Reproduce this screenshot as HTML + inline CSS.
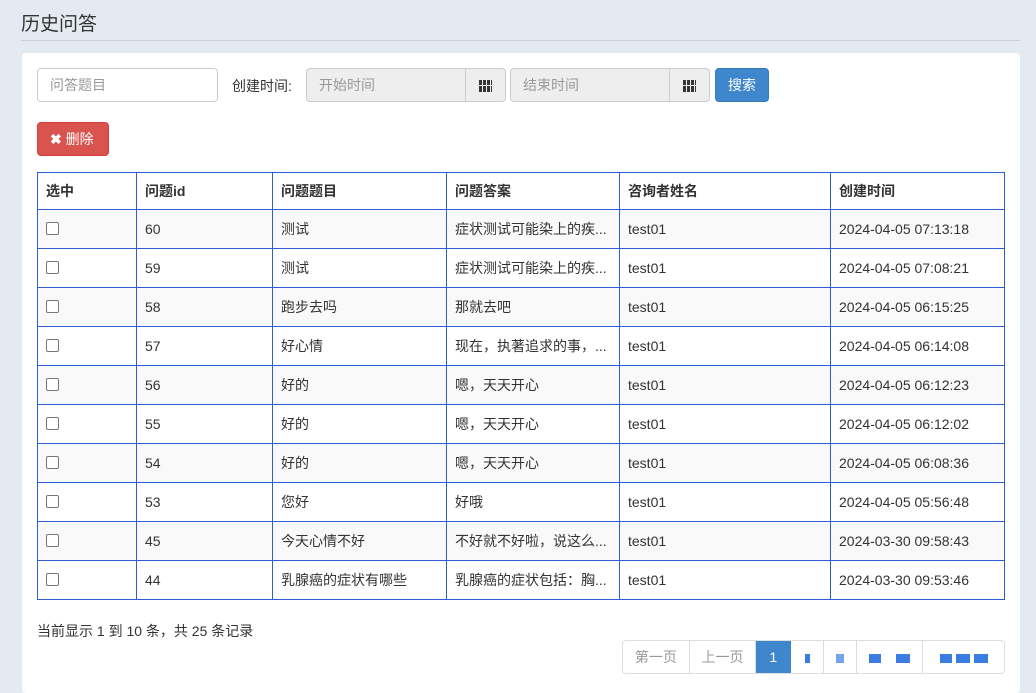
<!DOCTYPE html>
<html><head><meta charset="utf-8"><style>
*{box-sizing:border-box;margin:0;padding:0}
body{width:1036px;height:685px;background:#e4eaf2;font-family:"Liberation Sans","Noto Sans CJK SC",sans-serif;font-size:14px;color:#333;position:relative;overflow:hidden}
.abs{position:absolute}
h1{position:absolute;left:21px;top:9px;font-size:19px;font-weight:normal;color:#333}
.line{left:21px;top:40px;width:999px;height:1px;background:#c9d0d9}
.card{left:22px;top:53px;width:998px;height:640px;background:#fff;border-radius:4px}
.inp{height:34px;border:1px solid #ccc;border-radius:4px;line-height:32px;padding-left:12px;color:#999;font-size:14px}
.dis{background:#eee}
.addon{top:0;right:0;width:40px;height:32px;border-left:1px solid #ccc}
.grid{left:13px;top:11px;width:13px;height:12px;background:repeating-linear-gradient(90deg,#333 0 3px,transparent 3px 4px)}
.grid:after{content:"";position:absolute;left:0;top:5px;width:13px;height:1px;background:#eee}
table{position:absolute;left:37px;top:172px;width:968px;border-collapse:collapse}
td,th{border:1px solid #2d5ed6;height:39px;padding:0 8px;text-align:left;font-size:14px}
th{height:37px;font-weight:bold}
tr:nth-child(even) td{background:#f9f9f9}
.cb{display:inline-block;width:13px;height:13px;border:1px solid #777;border-radius:2px;vertical-align:middle;background:#fff;position:relative;top:-2px}
.pg{top:640px;height:34px;border:1px solid #ddd;border-radius:4px;display:flex;overflow:hidden;left:622px;width:383px}
.pg div{border-right:1px solid #ddd;line-height:32px;text-align:center;color:#999}
.blob{display:inline-block;background:#3b7de0;height:9px;vertical-align:middle}
</style></head><body>
<h1>历史问答</h1>
<div class="abs line"></div>
<div class="abs card"></div>
<div class="abs inp" style="left:37px;top:68px;width:181px">问答题目</div>
<div class="abs" style="left:232px;top:76px">创建时间:</div>
<div class="abs inp dis" style="left:306px;top:68px;width:200px">开始时间<div class="abs addon"><div class="abs grid"></div></div></div>
<div class="abs inp dis" style="left:510px;top:68px;width:200px">结束时间<div class="abs addon"><div class="abs grid"></div></div></div>
<div class="abs" style="left:715px;top:68px;width:54px;height:34px;background:#3e87cc;border:1px solid #367ab8;border-radius:4px;color:#fff;text-align:center;line-height:32px">搜索</div>
<div class="abs" style="left:37px;top:122px;width:72px;height:34px;background:#d9534f;border:1px solid #d43f3a;border-radius:4px;color:#fff;line-height:32px;padding-left:12px"><b>✖</b> 删除</div>
<table>
<tr><th style="width:99px">选中</th><th style="width:136px">问题id</th><th style="width:174px">问题题目</th><th style="width:173px">问题答案</th><th style="width:211px">咨询者姓名</th><th>创建时间</th></tr>
<tr><td><span class="cb"></span></td><td>60</td><td>测试</td><td>症状测试可能染上的疾...</td><td>test01</td><td>2024-04-05 07:13:18</td></tr>
<tr><td><span class="cb"></span></td><td>59</td><td>测试</td><td>症状测试可能染上的疾...</td><td>test01</td><td>2024-04-05 07:08:21</td></tr>
<tr><td><span class="cb"></span></td><td>58</td><td>跑步去吗</td><td>那就去吧</td><td>test01</td><td>2024-04-05 06:15:25</td></tr>
<tr><td><span class="cb"></span></td><td>57</td><td>好心情</td><td>现在，执著追求的事，...</td><td>test01</td><td>2024-04-05 06:14:08</td></tr>
<tr><td><span class="cb"></span></td><td>56</td><td>好的</td><td>嗯，天天开心</td><td>test01</td><td>2024-04-05 06:12:23</td></tr>
<tr><td><span class="cb"></span></td><td>55</td><td>好的</td><td>嗯，天天开心</td><td>test01</td><td>2024-04-05 06:12:02</td></tr>
<tr><td><span class="cb"></span></td><td>54</td><td>好的</td><td>嗯，天天开心</td><td>test01</td><td>2024-04-05 06:08:36</td></tr>
<tr><td><span class="cb"></span></td><td>53</td><td>您好</td><td>好哦</td><td>test01</td><td>2024-04-05 05:56:48</td></tr>
<tr><td><span class="cb"></span></td><td>45</td><td>今天心情不好</td><td>不好就不好啦，说这么...</td><td>test01</td><td>2024-03-30 09:58:43</td></tr>
<tr><td><span class="cb"></span></td><td>44</td><td>乳腺癌的症状有哪些</td><td>乳腺癌的症状包括：胸...</td><td>test01</td><td>2024-03-30 09:53:46</td></tr>
</table>
<div class="abs" style="left:37px;top:621px">当前显示 1 到 10 条，共 25 条记录</div>
<div class="abs pg">
<div style="width:67px">第一页</div>
<div style="width:67px">上一页</div>
<div style="width:35px;background:#3e87cc;color:#fff;border-color:#3e87cc">1</div>
<div style="width:33px"><span class="blob" style="width:5px"></span></div>
<div style="width:33px"><span class="blob" style="width:8px;opacity:.7"></span></div>
<div style="width:67px"><span class="blob" style="width:12px"></span>&nbsp;&nbsp;&nbsp;&nbsp;<span class="blob" style="width:14px"></span></div>
<div style="width:81px;border:none"><span class="blob" style="width:12px"></span>&nbsp;<span class="blob" style="width:14px"></span>&nbsp;<span class="blob" style="width:14px"></span></div>
</div>
</body></html>
